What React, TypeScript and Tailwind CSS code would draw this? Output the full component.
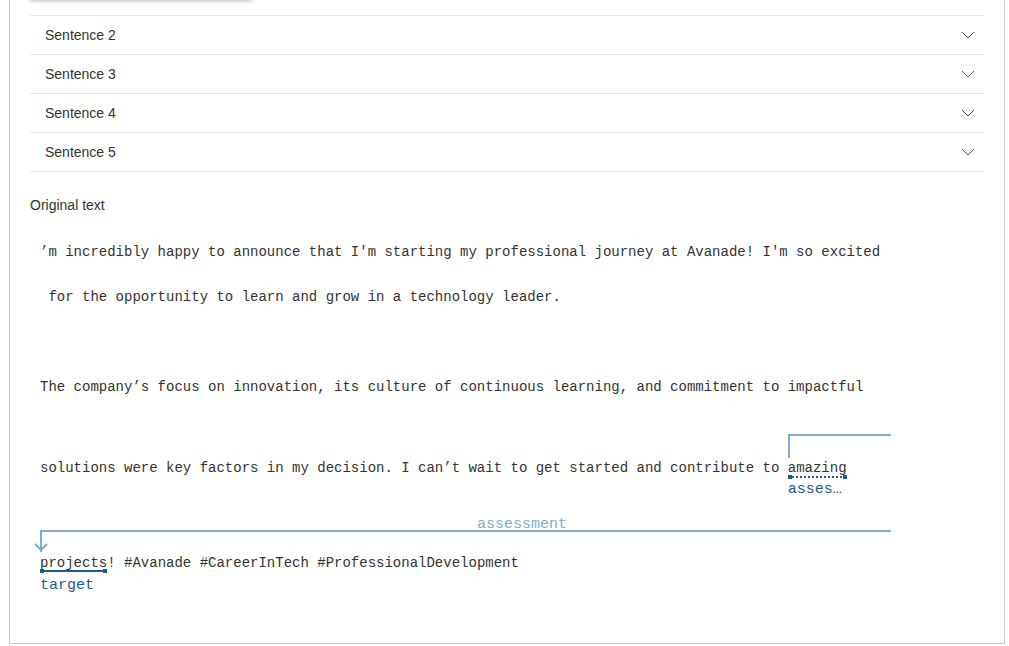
import React from "react";

const Chevron = () => (
  <svg width="14" height="8" viewBox="0 0 14 8" fill="none">
    <path d="M1 1 L7 7 L13 1" stroke="#555" strokeWidth="1" />
  </svg>
);

const Row = ({ label }: { label: string }) => (
  <div className="h-[39px] border-b border-[#e6e6e6] flex items-center justify-between pl-[15px] pr-[9px]">
    <span className="text-[14px] text-[#333]">{label}</span>
    <Chevron />
  </div>
);

export default function App() {
  return (
    <div className="w-[1009px] h-[646px] bg-white overflow-hidden" style={{ fontFamily: '"Liberation Sans", Arial, sans-serif' }}>
      <div className="ml-[9px] w-[996px] h-[644px] border-l border-r border-b border-[#c8c8c8] px-[20px] flex flex-col">
        <div className="w-[222px] h-[20px] -mt-[20px] bg-white shadow-[0_1px_4px_rgba(0,0,0,0.25)] shrink-0" />
        <div className="mt-[15px] border-t border-[#e6e6e6]">
          <Row label="Sentence 2" />
          <Row label="Sentence 3" />
          <Row label="Sentence 4" />
          <Row label="Sentence 5" />
        </div>
        <div className="mt-[23px] text-[14px] leading-[20px] text-[#333]">Original text</div>
        <div
          className="mt-[15px] text-[14px] text-[#333] whitespace-pre pl-[10px]"
          style={{ fontFamily: '"Liberation Mono", "Courier New", monospace' }}
        >
          <div className="h-[45px] leading-[45px]">{"’m incredibly happy to announce that I'm starting my professional journey at Avanade! I'm so excited"}</div>
          <div className="h-[45px] leading-[45px]">{" for the opportunity to learn and grow in a technology leader."}</div>
          <div className="h-[45px] leading-[45px]">{" "}</div>
          <div className="h-[45px] leading-[45px]">{"The company’s focus on innovation, its culture of continuous learning, and commitment to impactful"}</div>
          <div className="mt-[36px] h-[45px] leading-[45px]">
            {"solutions were key factors in my decision. I can’t wait to get started and contribute to "}
            <span className="relative inline-block leading-[20px]">
              amazing
              <span className="absolute left-0 top-[-24px] w-[103px] h-[24px] border-l-2 border-t-2 border-[#7fadd0]" />
              <span className="absolute left-[1px] right-[1px] top-[18px] border-b-2 border-dotted border-[#1c5a94]" />
              <span className="absolute left-0 top-[17px] w-[4px] h-[4px] bg-[#1c5a94]" />
              <span className="absolute right-0 top-[17px] w-[4px] h-[4px] bg-[#1c5a94]" />
              <span className="absolute left-0 top-[22px] text-[15px] text-[#1c5a94]">asses…</span>
            </span>
          </div>
          <div className="mt-[50px] h-[45px] leading-[45px]">
            <span className="relative inline-block leading-[20px]">
              projects
              <svg className="absolute left-[-7px] top-[-24px]" width="860" height="24" viewBox="0 0 860 24" fill="none">
                <path d="M8 23 L8 2 L858 2" stroke="#7fadd0" strokeWidth="2" />
                <path d="M2 15 L8 21 L14 15" stroke="#7fadd0" strokeWidth="2" />
              </svg>
              <span className="absolute left-[437px] top-[-38px] text-[15px] text-[#7fadd0]">assessment</span>
              <span className="absolute left-0 right-0 top-[17px] h-[2px] bg-[#1c5a94]" />
              <span className="absolute left-0 top-[16px] w-[4px] h-[4px] bg-[#1c5a94]" />
              <span className="absolute right-0 top-[16px] w-[4px] h-[4px] bg-[#1c5a94]" />
              <span className="absolute left-0 top-[23px] text-[15px] text-[#1c5a94]">target</span>
            </span>
            {"! #Avanade #CareerInTech #ProfessionalDevelopment"}
          </div>
        </div>
      </div>
    </div>
  );
}
